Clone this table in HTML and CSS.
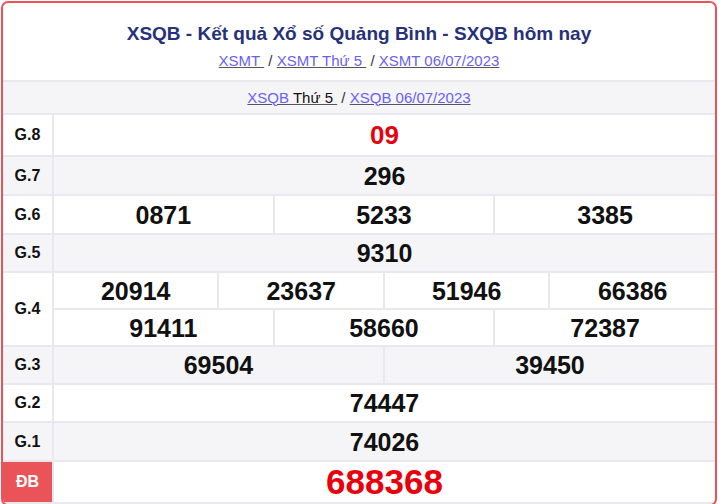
FILE: index.html
```html
<!DOCTYPE html>
<html lang="vi">
<head>
<meta charset="utf-8">
<title>XSQB</title>
<link rel="stylesheet" href="styles.css">
</head>
<body>
<div class="box">
  <div class="head">
    <h1 class="title">XSQB - Kết quả Xổ số Quảng Bình - SXQB hôm nay</h1>
    <div class="crumbs">
      <a href="#">XSMT </a> / <a href="#">XSMT Thứ 5 </a> / <a href="#">XSMT 06/07/2023</a>
    </div>
  </div>
  <table class="res">
    <colgroup>
      <col class="c-lab">
      <col><col><col><col><col><col><col><col><col><col><col><col>
    </colgroup>
    <tr class="sub">
      <td colspan="13"><a href="#">XSQB <span class="dark">Thứ 5 </span></a> / <a href="#">XSQB 06/07/2023</a></td>
    </tr>
    <tr class="r8">
      <td class="lab">G.8</td>
      <td colspan="12" class="num red">09</td>
    </tr>
    <tr class="alt r39">
      <td class="lab">G.7</td>
      <td colspan="12" class="num">296</td>
    </tr>
    <tr class="r39">
      <td class="lab">G.6</td>
      <td colspan="4" class="num">0871</td>
      <td colspan="4" class="num">5233</td>
      <td colspan="4" class="num">3385</td>
    </tr>
    <tr class="alt">
      <td class="lab">G.5</td>
      <td colspan="12" class="num">9310</td>
    </tr>
    <tr class="half">
      <td class="lab" rowspan="2">G.4</td>
      <td colspan="3" class="num">20914</td>
      <td colspan="3" class="num">23637</td>
      <td colspan="3" class="num">51946</td>
      <td colspan="3" class="num">66386</td>
    </tr>
    <tr class="half">
      <td colspan="4" class="num">91411</td>
      <td colspan="4" class="num">58660</td>
      <td colspan="4" class="num">72387</td>
    </tr>
    <tr class="alt">
      <td class="lab">G.3</td>
      <td colspan="6" class="num">69504</td>
      <td colspan="6" class="num">39450</td>
    </tr>
    <tr>
      <td class="lab">G.2</td>
      <td colspan="12" class="num">74447</td>
    </tr>
    <tr class="alt r39">
      <td class="lab">G.1</td>
      <td colspan="12" class="num">74026</td>
    </tr>
    <tr class="db">
      <td class="lab lab-db">ĐB</td>
      <td colspan="12" class="num red big">688368</td>
    </tr>
  </table>
</div>
</body>
</html>
```

FILE: styles.css
```css
html, body {
  margin: 0;
  padding: 0;
  background: #ffffff;
}
body {
  font-family: "Liberation Sans", Arial, sans-serif;
  color: #111;
}
.box {
  margin: 1px 0 0 1px;
  width: 712px;
  border: 2px solid #ea5459;
  border-radius: 7px;
  overflow: hidden;
  background: #fff;
}
.head {
  height: 77px;
  text-align: center;
  border-bottom: 2px solid #e8e8ee;
}
.title {
  margin: 0;
  padding-top: 20px;
  font-size: 19px;
  line-height: 22px;
  font-weight: bold;
  color: #27317a;
}
.crumbs {
  margin-top: 7px;
  font-size: 15px;
  line-height: 18px;
  color: #333;
}
a {
  color: #6a5ff5;
  text-decoration: underline;
  text-decoration-color: #555;
  white-space: pre;
}
.dark {
  color: #111;
}
.res {
  width: 712px;
  border-collapse: collapse;
  table-layout: fixed;
}
.c-lab {
  width: 50px;
}
.res td {
  border: 2px solid #e8e8ee;
  padding: 0;
  text-align: center;
  vertical-align: middle;
}
.res tr td:first-child { border-left: 0; }
.res tr td:last-child { border-right: 0; }
.res tr {
  height: 38px;
}
.res tr.sub { height: 32px; }
.sub td {
  border-top: 0;
  background: #f5f5f7;
  font-size: 15px;
  line-height: 18px;
  color: #333;
}
.res tr.r8 { height: 42px; }
.res tr.r39 { height: 39px; }
.res tr.half { height: 37px; }
.res tr.db { height: 42px; }
.alt td { background: #f5f5f7; }
.lab {
  font-size: 16px;
  font-weight: bold;
  color: #111;
}
.res td.lab { border-left: 0; }
.num {
  font-size: 25px;
  line-height: 28px;
  font-weight: bold;
  color: #111;
}
.num.red { color: #e8000c; }
.r8 .num.red { font-size: 26px; }
.num.big { font-size: 35px; line-height: 38px; }
.lab-db {
  background: #ea5459;
  color: #fff;
}
```
